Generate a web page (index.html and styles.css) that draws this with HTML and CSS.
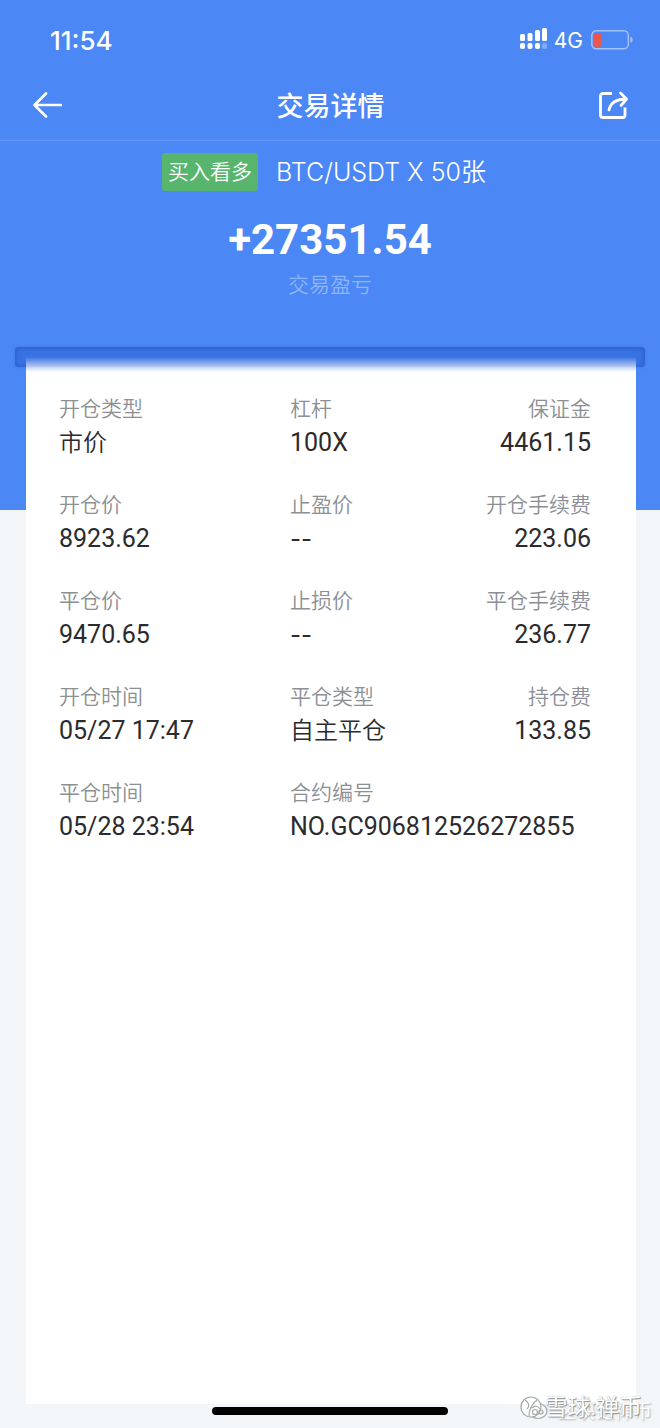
FILE: index.html
```html
<!DOCTYPE html>
<html lang="zh-CN">
<head>
<meta charset="utf-8">
<meta name="viewport" content="width=device-width, initial-scale=1">
<title>交易详情</title>
<link rel="stylesheet" href="styles.css">
</head>
<body>
<div class="screen">
  <header class="top">
    <div class="status">
      <span class="clock">11:54</span>
      <div class="indicators">
        <svg class="signal" width="28" height="22" viewBox="0 0 28 22" fill="#fff" aria-hidden="true">
          <rect x="0" y="7" width="5" height="7" rx="1.5"/><rect x="7.500" y="6" width="5" height="8" rx="1.500"/><rect x="15" y="3" width="5" height="11" rx="1.500"/><rect x="22" y="1" width="5" height="13" rx="1.500"/>
          <rect x="0" y="16" width="5" height="6" rx="2"/><rect x="7.500" y="16" width="5" height="6" rx="2"/><rect x="15" y="16" width="5" height="6" rx="2"/><rect x="22" y="16" width="5" height="6" rx="2" opacity=".3"/>
        </svg>
        <span class="network">4G</span>
        <svg class="battery" width="42" height="20" viewBox="0 0 42 20" aria-hidden="true">
          <rect x=".8" y=".8" width="36.500" height="18" rx="4.500" fill="none" stroke="#a3c1fb" stroke-width="1.500"/>
          <rect x="3" y="3" width="7" height="14" rx="2" fill="#e9564e"/>
          <path d="M39.300 6.500q2.500 1 2.500 3.300t-2.500 3.300z" fill="#a3c1fb"/>
        </svg>
      </div>
    </div>
    <nav class="navbar">
      <button class="icon-button" type="button" aria-label="返回">
        <svg width="30" height="28" viewBox="0 0 30 28" fill="none" stroke="#fff" stroke-width="2.700" stroke-linecap="round" stroke-linejoin="round"><path d="M29 14H2.500M14 2.500 2.500 14 14 25.500"/></svg>
      </button>
      <h1 class="title">交易详情</h1>
      <button class="icon-button" type="button" aria-label="分享">
        <svg width="30" height="28" viewBox="0 0 30 28" fill="none" stroke="#fff" stroke-width="2.800" stroke-linejoin="round"><path d="M13 2.500H4Q1.500 2.500 1.500 5v19q0 2.500 2.500 2.500h19.500q2.500 0 2.500-2.500v-7.500"/><path stroke-linecap="round" d="M10 19C11.500 12 17 8 27.500 8M21.500 2 27.500 8l-5.500 6.500"/></svg>
      </button>
    </nav>
    <section class="summary">
      <p class="contract"><span class="side">买入看多</span><span class="pair">BTC/USDT X 50张</span></p>
      <p class="profit">+27351.54</p>
      <p class="caption">交易盈亏</p>
    </section>
  </header>
  <main class="sheet">
    <div class="slot"></div>
    <div class="card">
      <dl class="details">
        <div class="item"><dt>开仓类型</dt><dd class="word">市价</dd></div>
        <div class="item"><dt>杠杆</dt><dd>100X</dd></div>
        <div class="item end"><dt>保证金</dt><dd>4461.15</dd></div>
        <div class="item"><dt>开仓价</dt><dd>8923.62</dd></div>
        <div class="item"><dt>止盈价</dt><dd class="empty">--</dd></div>
        <div class="item end"><dt>开仓手续费</dt><dd>223.06</dd></div>
        <div class="item"><dt>平仓价</dt><dd>9470.65</dd></div>
        <div class="item"><dt>止损价</dt><dd class="empty">--</dd></div>
        <div class="item end"><dt>平仓手续费</dt><dd>236.77</dd></div>
        <div class="item"><dt>开仓时间</dt><dd>05/27 17:47</dd></div>
        <div class="item"><dt>平仓类型</dt><dd class="word">自主平仓</dd></div>
        <div class="item end"><dt>持仓费</dt><dd>133.85</dd></div>
        <div class="item"><dt>平仓时间</dt><dd>05/28 23:54</dd></div>
        <div class="item wide"><dt>合约编号</dt><dd>NO.GC906812526272855</dd></div>
      </dl>
    </div>
  </main>
  <footer class="bottom"><div class="home"></div></footer>
  <div class="mark mark-back">区块链禅币</div>
  <div class="mark mark-front">
    <svg width="30" height="24" viewBox="0 0 30 24" fill="none" stroke="#a5a8aa" stroke-width="1.200" aria-hidden="true"><ellipse cx="18" cy="15" rx="9" ry="7.500" fill="#f8f9f9"/><circle cx="11" cy="11" r="10" fill="#fff"/><path d="M5 4c4 3 5 6 2 9M17 4c-5 4-8 9-8 16M12 12c3-3 6-2 8 1"/><circle cx="15" cy="16" r="2.500"/><circle cx="21" cy="16" r="2"/></svg>
    <span>雪球:禅币</span>
  </div>
</div>
</body>
</html>
```

FILE: styles.css
```css
* { box-sizing: border-box; }
body {
  margin: 0;
  background: #f2f6f8;
  font-family: Roboto, "Noto Sans CJK SC", sans-serif;
  color: #2b2b2d;
}
h1, p, dl, dd { margin: 0; }
.screen {
  position: relative;
  min-height: 100vh;
  display: flex;
  flex-direction: column;
  overflow: hidden;
}
.top {
  flex: none;
  background: #4b87f5;
  color: #fff;
  padding-bottom: 210px;
}
.status {
  display: flex;
  justify-content: space-between;
  align-items: center;
  height: 70px;
  padding: 10px 27px 0 50px;
  font-family: Inter, sans-serif;
}
.clock { font-size: 26px; font-weight: 500; }
.indicators { display: flex; align-items: center; gap: 8px; }
.signal { margin: 0 -2px 4px 0; }
.network { font-size: 21px; }
.navbar {
  display: flex;
  justify-content: space-between;
  align-items: center;
  height: 71px;
  padding: 0 31px 0 32px;
  border-bottom: 1px solid #6599f8;
}
.icon-button {
  display: flex;
  padding: 0;
  border: 0;
  background: none;
  cursor: pointer;
}
.title { padding-top: 3px; font-size: 27px; line-height: 40px; font-weight: 500; }
.summary {
  display: flex;
  flex-direction: column;
  align-items: center;
  padding-top: 12px;
}
.contract { display: flex; align-items: center; gap: 18px; padding-right: 12px; }
.side {
  padding: 0 6px;
  border-radius: 3px;
  background: #58b56d;
  font-size: 21px;
  line-height: 38px;
  font-weight: 350;
}
.pair {
  font-family: Inter, "Noto Sans CJK SC", sans-serif;
  font-size: 25px;
  line-height: 38px;
  font-weight: 350;
}
.profit { margin-top: 22px; font-size: 42px; line-height: 54px; font-weight: 700; }
.caption { margin-top: 3px; font-size: 21px; line-height: 30px; font-weight: 350; color: #8fb5fa; }
.sheet {
  flex: 1;
  display: flex;
  flex-direction: column;
  margin-top: -163px;
  padding: 0 15px;
}
.slot {
  height: 20px;
  border-radius: 4px;
  background: #3972e2;
  box-shadow: inset 0 0 5px 1px #2b60cf, 0 0 3px #3b74e3;
}
.card {
  flex: 1;
  margin: -10px 9px 0 11px;
  padding: 36px 45px 40px 33px;
  background: linear-gradient(to bottom, rgba(255, 255, 255, 0), #fff 15px);
}
.details {
  display: grid;
  grid-template-columns: 231px 1fr auto;
  row-gap: 29px;
}
.item.end { text-align: right; }
.item.wide { grid-column: span 2; }
dt { font-size: 21px; line-height: 32px; font-weight: 350; color: #8c8f93; }
dd { padding-top: 1px; font-size: 25px; line-height: 34px; }
.word { font-size: 24px; font-weight: 350; }
.empty { font-family: Inter, sans-serif; font-size: 24px; }
.bottom {
  flex: none;
  display: flex;
  justify-content: center;
  height: 24px;
  padding-top: 3px;
}
.home { width: 236px; height: 8px; border-radius: 4px; background: #000; }
.mark {
  position: absolute;
  font-size: 23px;
  line-height: 26px;
  color: #fff;
  white-space: nowrap;
}
.mark-front {
  right: 18px;
  bottom: 7px;
  display: flex;
  align-items: center;
  text-shadow: 1px 1px 1px #8b8e90, 0 0 1px #a5a8aa;
}
.mark-front svg { margin-right: -6px; }
.mark-back { right: 8px; bottom: 3px; font-size: 19px; text-shadow: 1px 1px 2px #a9acae; }
```
